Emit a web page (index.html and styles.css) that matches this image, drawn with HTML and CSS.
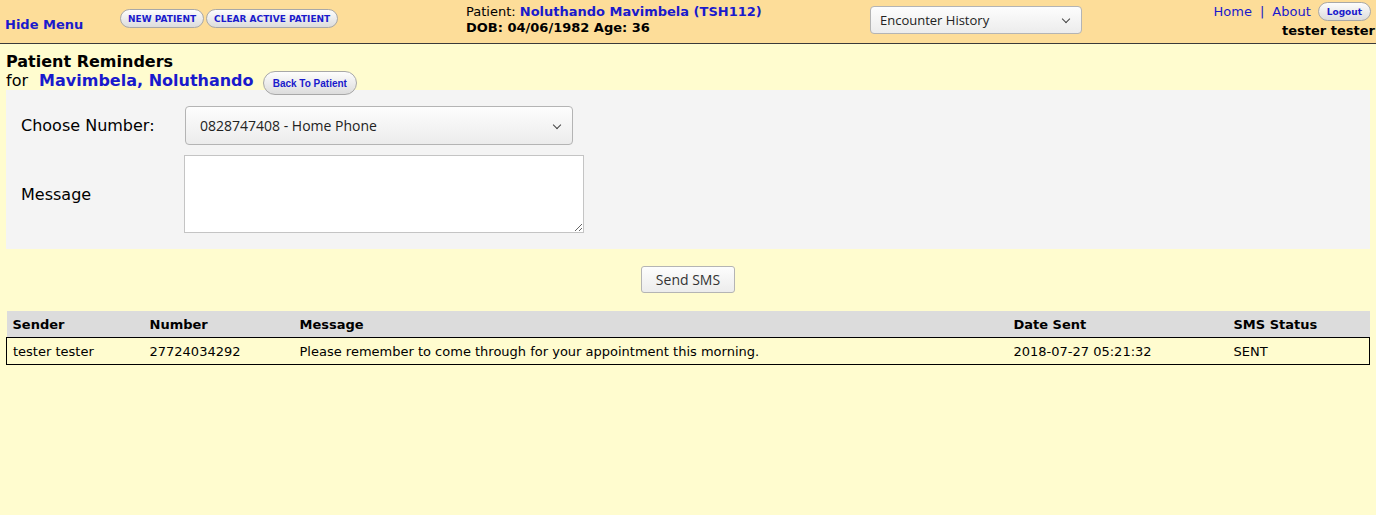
FILE: index.html
```html
<!DOCTYPE html>
<html lang="en">
<head>
  <meta charset="UTF-8" />
  <title>Patient Reminders</title>
  <link rel="stylesheet" href="styles.css">
</head>
<body>
  <header class="topbar">
    <a class="hide-menu" href="#">Hide Menu</a>
    <div class="top-buttons">
      <button class="pill">NEW PATIENT</button>
      <button class="pill">CLEAR ACTIVE PATIENT</button>
    </div>
    <div class="patient-info">
      <div>Patient: <span class="pname">Noluthando Mavimbela (TSH112)</span></div>
      <div class="dob">DOB: 04/06/1982 Age: 36</div>
    </div>
    <div class="encounter">
      <div class="fake-select enc-select">Encounter History<span class="chev"></span></div>
    </div>
    <div class="user-box">
      <div class="links"><a href="#">Home</a> <span class="sep">|</span> <a href="#">About</a> <button class="pill logout">Logout</button></div>
      <div class="username">tester tester</div>
    </div>
  </header>

  <main>
    <h1 class="title">Patient Reminders</h1>
    <div class="for-line">for <span class="for-name">Mavimbela, Noluthando</span> <button class="pill back">Back To Patient</button></div>

    <section class="panel">
      <div class="row">
        <label>Choose Number:</label>
        <div class="fake-select num-select">0828747408 - Home Phone<span class="chev"></span></div>
      </div>
      <div class="row">
        <label>Message</label>
        <textarea class="msg"></textarea>
      </div>
    </section>

    <div class="send-wrap"><button class="send">Send SMS</button></div>

    <table class="sms">
      <thead>
        <tr>
          <th class="c1">Sender</th>
          <th class="c2">Number</th>
          <th class="c3">Message</th>
          <th class="c4">Date Sent</th>
          <th>SMS Status</th>
        </tr>
      </thead>
      <tbody>
        <tr>
          <td>tester tester</td>
          <td>27724034292</td>
          <td>Please remember to come through for your appointment this morning.</td>
          <td>2018-07-27 05:21:32</td>
          <td>SENT</td>
        </tr>
      </tbody>
    </table>
  </main>
</body>
</html>
```

FILE: styles.css
```css
body {
  margin: 0;
  font-family: 'DejaVu Sans', Verdana, sans-serif;
  font-size: 13px;
  background-color: #fffccf;
  color: #000;
}
a {
  color: #1a1acc;
  text-decoration: none;
}
.topbar {
  height: 43px;
  background-color: #fddd99;
  border-bottom: 1px solid #3a3a3a;
  display: flex;
  align-items: flex-start;
}
.hide-menu {
  font-weight: bold;
  margin: 17px 0 0 5px;
  width: 115px;
}
.top-buttons {
  display: flex;
  gap: 2px;
  margin-top: 9px;
  width: 346px;
}
.pill {
  font-family: 'DejaVu Sans', Verdana, sans-serif;
  font-size: 9px;
  font-weight: bold;
  color: #1a1acc;
  background: linear-gradient(#fdfdfd, #dcdcdc);
  border: 1px solid #a8a8a8;
  border-radius: 10px;
  height: 19px;
  padding: 0 7px;
  cursor: pointer;
}
.patient-info {
  margin-top: 4px;
  width: 404px;
  line-height: 16px;
}
.pname {
  font-weight: bold;
  color: #1a1acc;
}
.dob {
  font-weight: bold;
}
.encounter {
  margin-top: 6px;
}
.fake-select {
  font-family: 'Open Sans', 'Noto Sans', sans-serif;
  background: linear-gradient(#fdfdfd, #ececec);
  border: 1px solid #b4b4b4;
  border-radius: 4px;
  color: #222;
  position: relative;
  box-sizing: border-box;
}
.enc-select {
  width: 212px;
  height: 28px;
  line-height: 26px;
  padding-left: 9px;
  font-size: 13px;
}
.chev {
  position: absolute;
  right: 12px;
  top: 50%;
  width: 5px;
  height: 5px;
  margin-top: -4px;
  border-right: 1.5px solid #444;
  border-bottom: 1.5px solid #444;
  transform: rotate(45deg);
}
.user-box {
  margin-left: auto;
  text-align: right;
  padding-right: 1px;
}
.links {
  margin-top: 2px;
  display: flex;
  align-items: center;
  justify-content: flex-end;
  gap: 8px;
}
.links a {
  font-size: 13px;
}
.sep {
  color: #1a1acc;
}
.logout {
  height: 19px;
  font-size: 9px;
  padding: 0 8px;
  margin-left: -1px;
  margin-right: 4px;
}
.username {
  font-weight: bold;
  margin-top: 2px;
}
main {
  padding: 0 6px;
}
.title {
  font-size: 16px;
  font-weight: bold;
  margin: 8px 0 0;
  line-height: 19px;
}
.for-line {
  font-size: 16px;
  height: 19px;
  line-height: 19px;
}
.for-name {
  font-weight: bold;
  color: #1a1acc;
  margin-left: 6px;
}
.back {
  font-family: 'Liberation Sans', Arial, sans-serif;
  font-size: 10px;
  height: 24px;
  border-radius: 12px;
  padding: 0 9px;
  margin-left: 4px;
  vertical-align: top;
  margin-top: 0;
  position: relative;
  z-index: 1;
}
.panel {
  background-color: #f4f4f4;
  padding: 16px 15px 16px 15px;
  height: 127px;
}
.row {
  display: flex;
  align-items: center;
}
.row + .row {
  margin-top: 10px;
}
.row label {
  width: 164px;
  font-size: 16px;
}
.num-select {
  width: 388px;
  height: 39px;
  line-height: 37px;
  padding-left: 14px;
  font-size: 14px;
}
.msg {
  width: 400px;
  height: 78px;
  box-sizing: border-box;
  border: 1px solid #c4c4c4;
  background: #fff;
  margin-left: -1px;
}
.send-wrap {
  text-align: center;
  padding-top: 17px;
}
.send {
  font-family: 'Open Sans', 'Noto Sans', sans-serif;
  font-size: 14px;
  color: #333;
  background: linear-gradient(#fdfdfd, #ececec);
  border: 1px solid #b4b4b4;
  border-radius: 3px;
  height: 27px;
  width: 94px;
  cursor: pointer;
}
.sms {
  width: 100%;
  border-collapse: collapse;
  margin-top: 18px;
}
.sms th {
  background-color: #dcdcdc;
  text-align: left;
  height: 26px;
  padding: 0 6px;
}
.sms td {
  height: 26px;
  padding: 0 6px;
  border-top: 1px solid #000;
  border-bottom: 1px solid #000;
}
.sms td:first-child {
  border-left: 1px solid #000;
}
.sms td:last-child {
  border-right: 1px solid #000;
}
.c1 { width: 125px; }
.c2 { width: 138px; }
.c3 { width: 702px; }
.c4 { width: 208px; }
```
